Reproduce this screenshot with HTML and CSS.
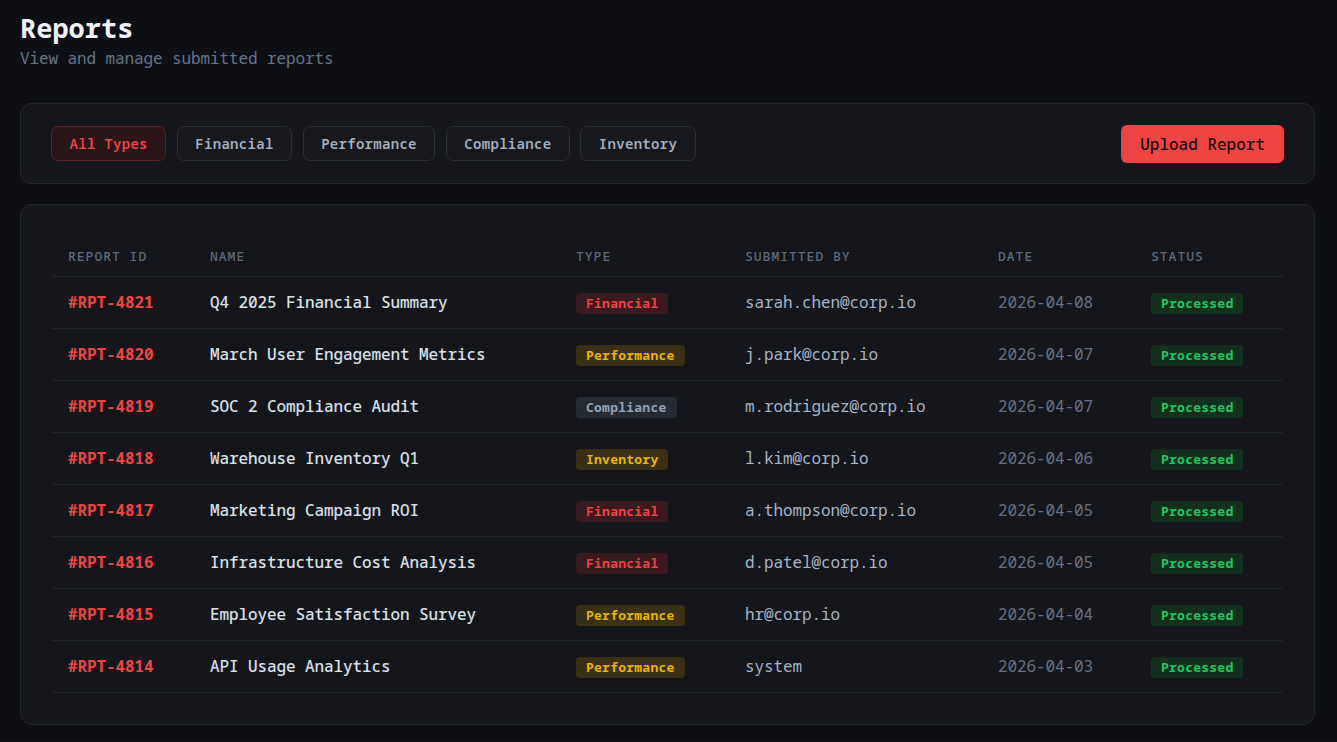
FILE: index.html
```html
<!DOCTYPE html>
<html lang="en">
<head>
<meta charset="utf-8">
<title>Reports</title>
<link rel="stylesheet" href="styles.css">
</head>
<body>
<div class="page">
  <header class="page-head">
    <h1 class="title">Reports</h1>
    <p class="subtitle">View and manage submitted reports</p>
  </header>

  <section class="card toolbar">
    <div class="chips">
      <button class="chip chip-active">All Types</button>
      <button class="chip">Financial</button>
      <button class="chip">Performance</button>
      <button class="chip">Compliance</button>
      <button class="chip">Inventory</button>
    </div>
    <button class="upload">Upload Report</button>
  </section>

  <section class="card table-card">
    <table class="reports">
      <colgroup>
        <col class="c-id"><col class="c-name"><col class="c-type"><col class="c-by"><col class="c-date"><col class="c-status">
      </colgroup>
      <thead>
        <tr><th>Report ID</th><th>Name</th><th>Type</th><th>Submitted By</th><th>Date</th><th>Status</th></tr>
      </thead>
      <tbody>
        <tr><td class="rid">#RPT-4821</td><td class="name">Q4 2025 Financial Summary</td><td><span class="badge b-fin">Financial</span></td><td class="by">sarah.chen@corp.io</td><td class="date">2026-04-08</td><td><span class="badge b-ok">Processed</span></td></tr>
        <tr><td class="rid">#RPT-4820</td><td class="name">March User Engagement Metrics</td><td><span class="badge b-perf">Performance</span></td><td class="by">j.park@corp.io</td><td class="date">2026-04-07</td><td><span class="badge b-ok">Processed</span></td></tr>
        <tr><td class="rid">#RPT-4819</td><td class="name">SOC 2 Compliance Audit</td><td><span class="badge b-comp">Compliance</span></td><td class="by">m.rodriguez@corp.io</td><td class="date">2026-04-07</td><td><span class="badge b-ok">Processed</span></td></tr>
        <tr><td class="rid">#RPT-4818</td><td class="name">Warehouse Inventory Q1</td><td><span class="badge b-perf">Inventory</span></td><td class="by">l.kim@corp.io</td><td class="date">2026-04-06</td><td><span class="badge b-ok">Processed</span></td></tr>
        <tr><td class="rid">#RPT-4817</td><td class="name">Marketing Campaign ROI</td><td><span class="badge b-fin">Financial</span></td><td class="by">a.thompson@corp.io</td><td class="date">2026-04-05</td><td><span class="badge b-ok">Processed</span></td></tr>
        <tr><td class="rid">#RPT-4816</td><td class="name">Infrastructure Cost Analysis</td><td><span class="badge b-fin">Financial</span></td><td class="by">d.patel@corp.io</td><td class="date">2026-04-05</td><td><span class="badge b-ok">Processed</span></td></tr>
        <tr><td class="rid">#RPT-4815</td><td class="name">Employee Satisfaction Survey</td><td><span class="badge b-perf">Performance</span></td><td class="by">hr@corp.io</td><td class="date">2026-04-04</td><td><span class="badge b-ok">Processed</span></td></tr>
        <tr><td class="rid">#RPT-4814</td><td class="name">API Usage Analytics</td><td><span class="badge b-perf">Performance</span></td><td class="by">system</td><td class="date">2026-04-03</td><td><span class="badge b-ok">Processed</span></td></tr>
      </tbody>
    </table>
  </section>
</div>
</body>
</html>
```

FILE: styles.css
```css
* { box-sizing: border-box; }

html, body {
  margin: 0;
  padding: 0;
}

body {
  background-color: #0c0e13;
  background-image: repeating-linear-gradient(to bottom, rgba(255,255,255,0.012) 0, rgba(255,255,255,0.012) 1px, transparent 1px, transparent 3px);
  font-family: "Noto Sans Mono", "DejaVu Sans Mono", monospace;
  color: #d8dee6;
  min-height: 742px;
}

.page {
  padding: 12px 22px 20px 20px;
}

.page-head {
  margin-bottom: 35px;
}

.title {
  margin: 0;
  font-size: 27px;
  line-height: 32px;
  font-weight: 700;
  color: #f1f3f6;
}

.subtitle {
  margin: 4px 0 0 0;
  font-size: 16px;
  letter-spacing: -0.1px;
  line-height: 20px;
  color: #67758a;
}

.card {
  background: #14161b;
  border: 1px solid #24272d;
  border-radius: 12px;
}

.toolbar {
  display: flex;
  align-items: center;
  justify-content: space-between;
  padding: 0 30px;
  height: 81px;
  margin-bottom: 20px;
}

.chips {
  display: flex;
  gap: 10.5px;
}

.chip {
  font-family: inherit;
  font-size: 14px;
  letter-spacing: 0.3px;
  font-weight: 600;
  height: 35px;
  padding: 0 17.5px;
  background: #16181d;
  border: 1px solid #2a2d34;
  border-radius: 7px;
  color: #a7b2c1;
}

.chip-active {
  background: #2a1518;
  border-color: #5a2126;
  color: #ef4444;
}

.upload {
  font-family: inherit;
  font-size: 16px;
  font-weight: 500;
  height: 38px;
  padding: 0 19px;
  background: #ef4444;
  border: none;
  border-radius: 6px;
  color: #1b0a0b;
}

.table-card {
  padding: 31px;
}

.reports {
  width: 100%;
  border-collapse: collapse;
  table-layout: fixed;
}

.c-id { width: 142px; }
.c-name { width: 366px; }
.c-type { width: 169px; }
.c-by { width: 253px; }
.c-date { width: 153px; }
.c-status { width: 148px; }

.reports th {
  text-align: left;
  font-size: 13px;
  font-weight: 500;
  letter-spacing: 1px;
  text-transform: uppercase;
  color: #626d80;
  height: 40px;
  padding: 0 16px;
  border-bottom: 1px solid #23262c;
}

.reports td {
  height: 52px;
  padding: 0 16px;
  border-bottom: 1px solid #202329;
  font-size: 16px;
  letter-spacing: -0.1px;
  white-space: nowrap;
}

.reports td.rid {
  color: #ef4444;
  font-weight: 700;
}

.reports td.name {
  color: #dbe1e9;
  font-weight: 500;
}

.reports td.by {
  color: #a9b5c6;
}

.reports td.date {
  color: #687284;
}

.badge {
  display: inline-block;
  font-size: 13px;
  font-weight: 700;
  letter-spacing: 0.25px;
  line-height: 21px;
  padding: 0 10px;
  border-radius: 4px;
}

.b-fin { background: #3a1a1e; color: #ef4444; }
.b-perf { background: #3a3014; color: #eab308; }
.b-comp { background: #252a33; color: #94a3b8; }
.b-ok { background: #13301f; color: #22c55e; }
```
